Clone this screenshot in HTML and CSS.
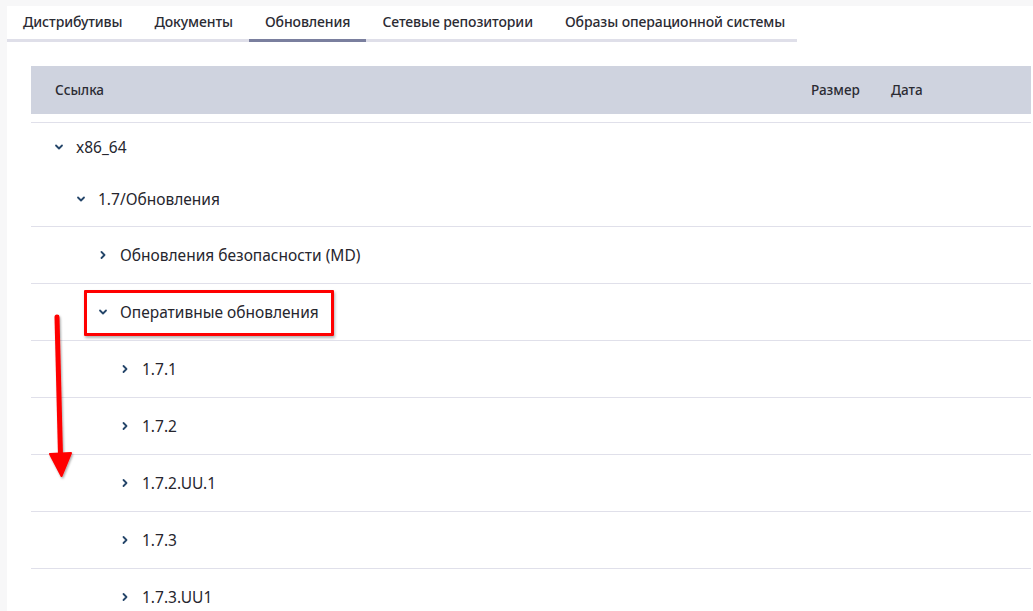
FILE: index.html
```html
<!DOCTYPE html>
<html lang="ru">
<head>
<meta charset="utf-8">
<title>Обновления</title>
<link rel="stylesheet" href="styles.css">
</head>
<body>
<div class="page">
  <nav class="tabs">
    <div class="tab">Дистрибутивы</div>
    <div class="tab">Документы</div>
    <div class="tab active">Обновления</div>
    <div class="tab">Сетевые репозитории</div>
    <div class="tab">Образы операционной системы</div>
  </nav>

  <div class="table">
    <div class="thead">
      <div class="col-link">Ссылка</div>
      <div class="col-size">Размер</div>
      <div class="col-date">Дата</div>
    </div>
    <div class="tbody">
      <div class="group">
        <div class="item item-top lvl0"><svg class="chev" viewBox="0 0 10 10"><path d="M2 3.5 L5 6.5 L8 3.5"/></svg><span>x86_64</span></div>
        <div class="item item-sub lvl1"><svg class="chev" viewBox="0 0 10 10"><path d="M2 3.5 L5 6.5 L8 3.5"/></svg><span>1.7/Обновления</span></div>
      </div>
      <div class="row lvl2"><svg class="chev" viewBox="0 0 10 10"><path d="M3.5 2 L6.5 5 L3.5 8"/></svg><span>Обновления безопасности (MD)</span></div>
      <div class="row lvl2 marked"><svg class="chev" viewBox="0 0 10 10"><path d="M2 3.5 L5 6.5 L8 3.5"/></svg><span>Оперативные обновления</span><div class="highlight"></div></div>
      <div class="row lvl3"><svg class="chev" viewBox="0 0 10 10"><path d="M3.5 2 L6.5 5 L3.5 8"/></svg><span>1.7.1</span></div>
      <div class="row lvl3"><svg class="chev" viewBox="0 0 10 10"><path d="M3.5 2 L6.5 5 L3.5 8"/></svg><span>1.7.2</span></div>
      <div class="row lvl3"><svg class="chev" viewBox="0 0 10 10"><path d="M3.5 2 L6.5 5 L3.5 8"/></svg><span>1.7.2.UU.1</span></div>
      <div class="row lvl3"><svg class="chev" viewBox="0 0 10 10"><path d="M3.5 2 L6.5 5 L3.5 8"/></svg><span>1.7.3</span></div>
      <div class="row lvl3"><svg class="chev" viewBox="0 0 10 10"><path d="M3.5 2 L6.5 5 L3.5 8"/></svg><span>1.7.3.UU1</span></div>
    </div>
    <svg class="arrow" viewBox="0 0 30 170" width="30" height="170">
      <defs>
        <filter id="sh" x="-50%" y="-20%" width="200%" height="140%">
          <feDropShadow dx="1" dy="1.5" stdDeviation="1.2" flood-color="#000" flood-opacity="0.35"/>
        </filter>
      </defs>
      <g filter="url(#sh)">
        <path d="M12 3 L15.5 142" stroke="#ff0000" stroke-width="5" stroke-linecap="round" fill="none"/>
        <path d="M5 140 L26 139 L16.5 162 Z" fill="#ff0000" stroke="#ff0000" stroke-width="2" stroke-linejoin="round"/>
      </g>
    </svg>
  </div>
</div>
</body>
</html>
```

FILE: styles.css
```css
html, body {
  margin: 0;
  padding: 0;
}
body {
  background: #f7f7f8;
  font-family: "Noto Sans", "Open Sans", "DejaVu Sans", sans-serif;
  color: #2a2a33;
}
.page {
  margin: 6px 0 0 7px;
  background: #ffffff;
  height: 605px;
  overflow: hidden;
  position: relative;
}
.tabs {
  display: flex;
  width: 790px;
  border-bottom: 3px solid #dfdfe9;
  height: 33px;
}
.tab {
  padding: 0 16px;
  font-size: 14px;
  font-weight: 500;
  line-height: 32px;
  color: #2b2b33;
  white-space: nowrap;
  letter-spacing: -0.1px;
}
.tab.active {
  border-bottom: 3px solid #7a7f9e;
  height: 33px;
}
.table {
  margin: 24px 0 0 24px;
  width: 1000px;
  position: relative;
}
.thead {
  display: flex;
  align-items: center;
  height: 48px;
  background: #cfd3df;
  font-size: 13.5px;
  font-weight: 500;
  color: #2b2b33;
}
.col-link {
  padding-left: 24px;
  flex: 1;
}
.col-size {
  width: 80px;
}
.col-date {
  width: 140px;
}
.tbody {
  margin-top: 8px;
}
.group {
  border-top: 1px solid #e0e0ea;
  height: 103px;
}
.item, .row {
  display: flex;
  align-items: center;
  font-size: 15.5px;
  color: #26262e;
}
.item-top {
  height: 48px;
}
.item-sub {
  height: 55px;
}
.row {
  border-top: 1px solid #e0e0ea;
  height: 56px;
  position: relative;
}
.chev {
  width: 10px;
  height: 10px;
  margin-right: 12px;
  flex: none;
}
.chev path {
  fill: none;
  stroke: #25466a;
  stroke-width: 1.8;
  stroke-linecap: round;
  stroke-linejoin: round;
}
.lvl0 { padding-left: 23px; }
.lvl1 { padding-left: 45px; }
.lvl2 { padding-left: 67px; }
.lvl3 { padding-left: 89px; }
.highlight {
  position: absolute;
  left: 53px;
  top: 6px;
  width: 244px;
  height: 40px;
  border: 3px solid #ff0000;
  border-radius: 1px;
  box-shadow: 1px 2px 3px rgba(0,0,0,0.3);
  pointer-events: none;
}
.arrow {
  position: absolute;
  left: 14px;
  top: 248px;
}
```
